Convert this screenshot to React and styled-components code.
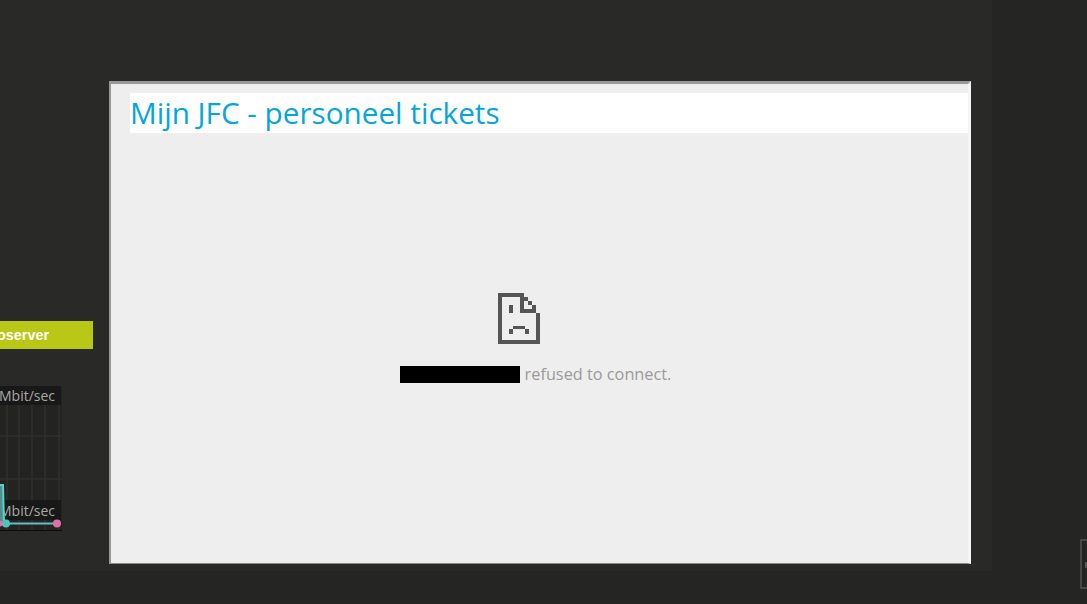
import React from 'react';
import styled, { createGlobalStyle } from 'styled-components';

const GlobalStyle = createGlobalStyle`
    html, body {
        margin: 0;
        height: 100%;
        background: #252523;
        overflow: hidden;
    }
`;

const Stage = styled.div`
    display: flex;
    width: 992px;
    height: 571px;
    background: #292927;
`;

const Sidebar = styled.div`
    width: 109px;
    flex-shrink: 0;
    padding-top: 321px;
    box-sizing: border-box;
`;

const Banner = styled.div`
    display: flex;
    justify-content: flex-end;
    align-items: center;
    width: 93px;
    height: 28px;
    padding-right: 44px;
    box-sizing: border-box;
    overflow: hidden;
    background: #b9c716;
    color: #fff;
    font: bold 14.4px "Liberation Sans", sans-serif;
    white-space: nowrap;
`;

const Chart = styled.div`
    position: relative;
    width: 62px;
    height: 145px;
    margin-top: 37px;
    overflow: hidden;
    background: #232322;
    border-bottom: 1px solid #0c0c0c;
    box-sizing: border-box;
`;

const ChartLines = styled.svg`
    display: block;
`;

const ChartOverlay = styled(ChartLines)`
    position: absolute;
    left: 0;
    top: 0;
`;

const ChartLabel = styled.div`
    position: absolute;
    left: 0;
    right: 1px;
    top: ${(props) => props.$top}px;
    height: 20px;
    padding-right: 6px;
    box-sizing: border-box;
    background: rgba(24, 22, 22, 0.85);
    color: #a8a8a4;
    font: 14px/21px "Open Sans", sans-serif;
    text-align: right;
    white-space: nowrap;
`;

const LabelText = styled.span`
    position: relative;
    left: -1px;
`;

const Panel = styled.div`
    display: flex;
    flex-direction: column;
    width: 862px;
    height: 483px;
    margin-top: 81px;
    padding: 9px 0 0 19px;
    box-sizing: border-box;
    background: #eeeeee;
    border-top: 3px solid #989898;
    border-left: 2px solid #989898;
    border-right: 3px solid #f5f5f5;
    border-bottom: 1px solid #8a8a8a;
`;

const Title = styled.h1`
    margin: 0;
    height: 40px;
    background: #fff;
    color: #05a5dd;
    font: 400 29.7px/40px "Open Sans", sans-serif;
    white-space: nowrap;
`;

const ErrorBox = styled.div`
    display: flex;
    flex-direction: column;
    align-items: center;
    margin-top: 160px;
    margin-left: -25px;
`;

const SadFile = styled.svg`
    display: block;
    margin-right: 36px;
`;

const Message = styled.div`
    display: flex;
    align-items: center;
    gap: 5px;
    margin-top: 20px;
    margin-left: -2px;
    color: #9b9999;
    font: 16.3px/20px "Open Sans", sans-serif;
    white-space: nowrap;
`;

const Redacted = styled.span`
    width: 120px;
    height: 17px;
    background: #000;
`;

const EdgeHandle = styled.div`
    position: absolute;
    left: 1080px;
    top: 539px;
    width: 20px;
    height: 50px;
    box-sizing: border-box;
    border: 2px solid #484846;
    &::after {
        content: '';
        position: absolute;
        left: 3px;
        top: 21px;
        width: 4px;
        height: 6px;
        background: #555;
    }
`;

const gridX = [7, 19, 32, 45, 59];
const gridY = [50, 93];

const App = () => {
    return (
        <>
            <GlobalStyle />
            <Stage>
                <Sidebar>
                    <Banner>Videoserver</Banner>
                    <Chart>
                        <ChartLines width="62" height="145">
                            {gridX.map((x) => (
                                <line key={x} x1={x} y1="0" x2={x} y2="144" stroke="#30302e" strokeWidth="1.5" />
                            ))}
                            {gridY.map((y) => (
                                <line key={y} x1="0" y1={y} x2="62" y2={y} stroke="#30302e" strokeWidth="1.5" />
                            ))}
                        </ChartLines>
                        <ChartLabel $top={-1}><LabelText>Mbit/sec</LabelText></ChartLabel>
                        <ChartLabel $top={114}><LabelText>Mbit/sec</LabelText></ChartLabel>
                        <ChartOverlay width="62" height="145">
                            <path d="M0 99 L3 99 L4 138 L0 138 Z" fill="#4f8f8e" />
                            <path d="M0 99 L3 99 L4 137" fill="none" stroke="#62cfc9" strokeWidth="2" />
                            <line x1="0" y1="137.5" x2="57" y2="137.5" stroke="#62bfc0" strokeWidth="2" />
                            <circle cx="0" cy="137.5" r="3" fill="#e46ea8" />
                            <circle cx="6" cy="137.5" r="4" fill="#4fc4bf" />
                            <circle cx="57" cy="137.5" r="4" fill="#e46ea8" />
                        </ChartOverlay>
                    </Chart>
                </Sidebar>
                <Panel>
                    <Title>Mijn JFC - personeel tickets</Title>
                    <ErrorBox>
                        <SadFile width="42" height="51" viewBox="0 0 42 51" fill="#555">
                            <path d="M0 0H26V4H26V16H38V20H42V51H0ZM4 4V47H38V20H22V4Z" />
                            <path d="M26 4H30V8H26ZM30 8H34V12H30ZM34 12H38V16H34Z" />
                            <path d="M11 12H15V20H11ZM15 33H27V36H15ZM11 36H15V41H11ZM27 36H31V41H27Z" />
                        </SadFile>
                        <Message>
                            <Redacted />
                            refused to connect.
                        </Message>
                    </ErrorBox>
                </Panel>
            </Stage>
            <EdgeHandle />
        </>
    );
};

export default App;
